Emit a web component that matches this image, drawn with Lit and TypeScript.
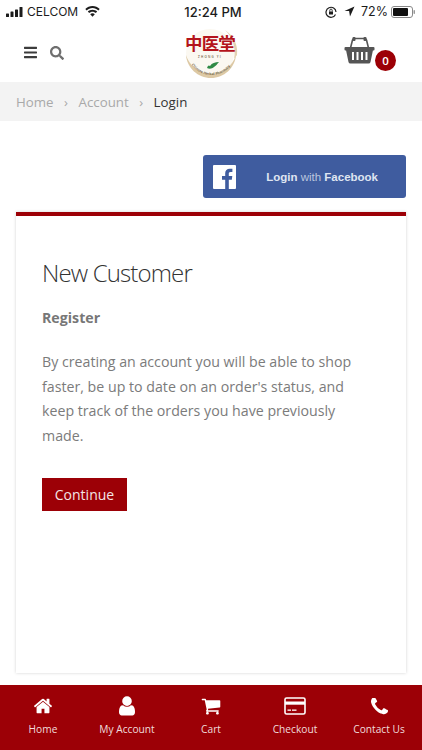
import { LitElement, html, css, svg } from "lit";
import { customElement } from "lit/decorators.js";

const PATHS = {
  home: "M1472 992v480q0 26-19 45t-45 19h-384v-384h-256v384h-384q-26 0-45-19t-19-45v-480q0-1 .5-3t.5-3l575-474 575 474q1 2 1 6zm223-69l-62 74q-8 9-21 11h-3q-13 0-21-7l-692-577-692 577q-12 8-24 7-13-2-21-11l-62-74q-8-10-7-23.500t11-21.500l719-599q32-26 76-26t76 26l244 204v-195q0-14 9-23t23-9h192q14 0 23 9t9 23v408l219 182q10 8 11 21.500t-7 23.500z",
  user: "M1536 1399q0 109-62.500 187t-150.500 78h-854q-88 0-150.500-78t-62.500-187q0-85 8.500-160.500t31.500-152 58.500-131 94-89 134.500-34.500q131 128 313 128t313-128q76 0 134.500 34.500t94 89 58.500 131 31.500 152 8.500 160.500zm-256-887q0 159-112.500 271.500t-271.500 112.500-271.500-112.500-112.500-271.500 112.500-271.500 271.500-112.500 271.500 112.500 112.500 271.500z",
  cart: "M704 1536q0 52-38 90t-90 38-90-38-38-90 38-90 90-38 90 38 38 90zm896 0q0 52-38 90t-90 38-90-38-38-90 38-90 90-38 90 38 38 90zm128-1088v512q0 24-16.500 42.500t-40.500 21.500l-1044 122q13 60 13 70 0 16-24 64h920q26 0 45 19t19 45-19 45-45 19h-1024q-26 0-45-19t-19-45q0-11 8-31.500t16-36 21.500-40 15.500-29.500l-177-823h-204q-26 0-45-19t-19-45 19-45 45-19h256q16 0 28.500 6.500t19.500 15.500 13 24.500 8 26 5.500 29.500 4.500 26h1201q26 0 45 19t19 45z",
  phone: "M1600 1240q0 27-10 70.500t-21 68.500q-21 50-122 106-94 51-186 51-27 0-53-3.500t-57.500-12.500-47-14.500-55.500-20.500-49-18q-98-35-175-83-127-79-264-216t-216-264q-48-77-83-175-3-9-18-49t-20.500-55.500-14.500-47-12.500-57.500-3.500-53q0-92 51-186 56-101 106-122 25-11 68.500-21t70.500-10q14 0 21 3 18 6 53 76 11 19 30 54t35 63.500 31 53.500q3 4 17.500 25t21.500 35.500 7 28.500q0 20-28.500 50t-62 55-62 53-28.500 46q0 9 5 22.500t8.500 20.500 14 24 11.500 19q76 137 174 235t235 174q2 1 19 11.500t24 14 20.500 8.500 22.500 5q18 0 46-28.500t53-62 55-62 50-28.500q14 0 28.500 7t35.500 21.500 25 17.500q25 15 53.500 31t63.500 35 54 30q70 35 76 53 3 7 3 21z",
};

const footerItems = [
  { label: "Home", icon: svg`<svg class="ico i-home" viewBox="0 0 1792 1792" fill="#fff"><path d=${PATHS.home}></path></svg>` },
  { label: "My Account", icon: svg`<svg class="ico i-user" viewBox="200 100 1392 1600" fill="#fff"><path d=${PATHS.user}></path></svg>` },
  { label: "Cart", icon: svg`<svg class="ico i-cart" viewBox="0 0 1792 1792" fill="#fff"><path d=${PATHS.cart}></path></svg>` },
  { label: "Checkout", icon: svg`<svg class="ico i-card" viewBox="0 0 22 18"><rect x="1" y="1" width="20" height="16" rx="1.600" fill="none" stroke="#fff" stroke-width="1.600"></rect><rect x="1" y="4.500" width="20" height="3.200" fill="#fff"></rect><rect x="3.500" y="12.500" width="3.500" height="1.300" fill="#fff"></rect><rect x="8" y="12.500" width="4.500" height="1.300" fill="#fff"></rect></svg>` },
  { label: "Contact Us", icon: svg`<svg class="ico i-phone" viewBox="192 192 1408 1408" fill="#fff"><path d=${PATHS.phone}></path></svg>` },
];

@customElement("app-root")
export class AppRoot extends LitElement {
  static styles = css`
    :host {
      display: flex;
      flex-direction: column;
      width: 422px;
      height: 750px;
      overflow: hidden;
      background: #fff;
      font-family: "Open Sans", "Liberation Sans", sans-serif;
    }
    .status {
      height: 23px;
      flex: none;
      display: grid;
      grid-template-columns: 1fr auto 1fr;
      align-items: center;
      padding: 0 6px 0 6px;
      font-family: Inter, "Liberation Sans", sans-serif;
      font-size: 12.500px;
      color: #1c1c1c;
    }
    .st-left, .st-right { display: flex; align-items: center; }
    .st-left { gap: 3px; }
    .st-left span { font-size: 12px; }
    .st-wifi { margin-left: 4px; }
    .st-right { justify-content: flex-end; }
    .st-time { font-weight: 500; font-size: 13px; margin-left: 4px; }
    .st-arrow { margin-left: 7px; }
    .st-pct { margin-left: 6px; }
    .st-bat { margin-left: 3px; }
    .head {
      height: 59px;
      flex: none;
      display: grid;
      grid-template-columns: 1fr auto 1fr;
      align-items: center;
      padding: 0 26px 0 24px;
    }
    .head-left { display: flex; align-items: center; gap: 13px; }
    .head-right { display: flex; justify-content: flex-end; align-items: center; }
    .logo { display: block; width: 58px; height: 52px; }
    .logo-cn {
      font-family: "Noto Sans CJK SC", sans-serif;
      font-weight: 700;
      font-size: 17.500px;
      letter-spacing: -0.800px;
      fill: #b4141c;
    }
    .logo-small {
      font-family: "Open Sans", sans-serif;
      font-size: 3.600px;
      font-weight: 600;
      fill: #6b5a3c;
    }
    .logo-tiny { font-size: 3px; }
    .basket { position: relative; width: 52px; height: 32px; }
    .badge {
      position: absolute;
      right: 0;
      bottom: -2px;
      width: 21px;
      height: 21px;
      border-radius: 50%;
      background: #9c0006;
      color: #fff;
      font-size: 11.500px;
      font-weight: 600;
      display: flex;
      align-items: center;
      justify-content: center;
    }
    .crumbs {
      height: 39px;
      flex: none;
      background: #f3f3f3;
      display: flex;
      align-items: center;
      padding: 0 16px;
      font-size: 13.300px;
      color: #a9a9a9;
    }
    .crumbs .sep { margin: 0 10.500px; font-size: 13px; }
    .crumbs .cur { color: #333; }
    .main {
      flex: 1;
      min-height: 0;
      display: flex;
      flex-direction: column;
      padding: 34px 16px 12px;
    }
    .fb-row { display: flex; justify-content: flex-end; }
    .fb {
      width: 203px;
      height: 43px;
      box-sizing: border-box;
      border-radius: 3px;
      background: #3f5c9f;
      padding: 0 28px 0 10px;
      display: flex;
      align-items: center;
      justify-content: space-between;
      font-family: "Liberation Sans", Arial, sans-serif;
      font-size: 11.500px;
      color: #dfe5f1;
    }
    .fb b { font-weight: 700; }
    .fb span { color: #b9c5de; }
    .fb-mark { width: 23px; height: 24px; }
    .card {
      flex: 1;
      margin-top: 14px;
      border-top: 4px solid #9c0006;
      background: #fff;
      box-shadow: 0 0 3px rgba(0, 0, 0, 0.18);
      padding: 39px 26px 0;
    }
    h1 {
      margin: 0;
      font-weight: 300;
      font-size: 24px;
      line-height: 36px;
      letter-spacing: -0.850px;
      color: #333;
    }
    h2 {
      margin: 17px 0 0;
      font-size: 14.200px;
      line-height: 20px;
      font-weight: 700;
      color: #777;
    }
    p {
      margin: 22px 0 0;
      max-width: 325px;
      font-size: 14.200px;
      line-height: 24.500px;
      color: #7b7b7b;
    }
    .continue {
      margin-top: 30px;
      display: block;
      width: 85px;
      height: 33px;
      border: 0;
      padding: 0;
      background: #9c0006;
      color: #f3e6e6;
      font-family: inherit;
      font-size: 14px;
    }
    .foot {
      height: 65px;
      flex: none;
      box-sizing: border-box;
      padding: 0 1px;
      background: #9c0006;
      display: grid;
      grid-template-columns: repeat(5, 1fr);
      color: #f0dcdc;
      font-size: 10.200px;
    }
    .foot-item {
      display: flex;
      flex-direction: column;
      align-items: center;
    }
    .foot-icon {
      height: 24px;
      margin-top: 9px;
      display: flex;
      align-items: center;
      justify-content: center;
    }
    .i-home { width: 20px; height: 20px; }
    .i-user { width: 18px; height: 20px; }
    .i-cart { width: 20px; height: 20px; }
    .i-card { width: 22px; height: 18px; }
    .i-phone { width: 17px; height: 17px; }
    .foot-label { margin-top: 1px; line-height: 20px; white-space: nowrap; }
  `;

  render() {
    return html`
      <div class="status">
        <div class="st-left">
          <svg width="18" height="10" viewBox="0 0 18 10" fill="#1c1c1c">
            <rect x="0" y="6.500" width="3" height="3.500" rx=".6"></rect>
            <rect x="4.500" y="4.500" width="3" height="5.500" rx=".6"></rect>
            <rect x="9" y="2.500" width="3" height="7.500" rx=".6"></rect>
            <rect x="13.500" y="0" width="3" height="10" rx=".6"></rect>
          </svg>
          <span>CELCOM</span>
          <svg class="st-wifi" width="15" height="11" viewBox="0 0 15 11" fill="#1c1c1c">
            <path d="M7.500 0C4.700 0 2.200 1.100.3 2.900l1.400 1.500C3.200 2.900 5.300 2 7.500 2s4.300.9 5.800 2.400l1.400-1.500C12.800 1.100 10.300 0 7.500 0z"></path>
            <path d="M7.500 3.700c-1.800 0-3.500.7-4.700 1.900l1.400 1.500c.9-.8 2-1.400 3.300-1.400s2.400.6 3.300 1.400l1.400-1.500C11 4.400 9.300 3.700 7.500 3.700z"></path>
            <path d="M7.500 7.300c-.9 0-1.700.4-2.300 1l2.300 2.500 2.300-2.500c-.6-.6-1.400-1-2.300-1z"></path>
          </svg>
        </div>
        <div class="st-time">12:24 PM</div>
        <div class="st-right">
          <svg width="12" height="12" viewBox="0 0 12 12" fill="none" stroke="#1c1c1c" stroke-width="1.200">
            <path d="M10.500 8.500A5 5 0 1 1 11 6"></path>
            <rect x="4" y="5.500" width="4" height="3" fill="#1c1c1c" stroke="none"></rect>
            <path d="M4.800 5.500V4.300a1.200 1.200 0 0 1 2.400 0v1.200" stroke-width=".9"></path>
          </svg>
          <svg class="st-arrow" width="11" height="11" viewBox="0 0 11 11" fill="#1c1c1c"><path d="M10.500.5L.5 5h4.600l.9 5.500z"></path></svg>
          <span class="st-pct">72%</span>
          <svg class="st-bat" width="25" height="12" viewBox="0 0 25 12">
            <rect x=".5" y=".5" width="21" height="11" rx="2.500" fill="none" stroke="#888"></rect>
            <rect x="2" y="2" width="15" height="8" rx="1" fill="#111"></rect>
            <rect x="22.500" y="4" width="1.500" height="4" rx=".7" fill="#999"></rect>
          </svg>
        </div>
      </div>

      <div class="head">
        <div class="head-left">
          <svg width="13" height="15" viewBox="0 0 448 512" fill="#3c3c3c"><path d="M16 132h416c8.837 0 16-7.163 16-16V76c0-8.837-7.163-16-16-16H16C7.163 60 0 67.163 0 76v40c0 8.837 7.163 16 16 16zm0 160h416c8.837 0 16-7.163 16-16v-40c0-8.837-7.163-16-16-16H16c-8.837 0-16 7.163-16 16v40c0 8.837 7.163 16 16 16zm0 160h416c8.837 0 16-7.163 16-16v-40c0-8.837-7.163-16-16-16H16c-8.837 0-16 7.163-16 16v40c0 8.837 7.163 16 16 16z"></path></svg>
          <svg width="14" height="14" viewBox="0 0 512 512" fill="#6f6f6f"><path d="M505 442.700L405.300 343c-4.500-4.500-10.600-7-17-7H372c27.600-35.300 44-79.700 44-128C416 93.100 322.900 0 208 0S0 93.100 0 208s93.100 208 208 208c48.300 0 92.700-16.400 128-44v16.300c0 6.400 2.500 12.500 7 17l99.700 99.700c9.400 9.400 24.600 9.400 33.900 0l28.300-28.300c9.400-9.400 9.400-24.600.1-34zM208 336c-70.700 0-128-57.200-128-128 0-70.700 57.200-128 128-128 70.700 0 128 57.200 128 128 0 70.700-57.200 128-128 128z"></path></svg>
        </div>
        <svg class="logo" viewBox="0 0 58 52" fill="none">
          <defs><path id="arc" d="M10 37C15 44 22 48 30 48c9 0 17-4 21-12"></path></defs>
          <circle cx="29" cy="26" r="24" fill="#fbf8f1"></circle>
          <path d="M5 28c1 13 12 23 25 23 13 0 24-10 25-23-3 10-13 19-25 19C18 47 8 38 5 28z" fill="#ddc9a5"></path>
          <path d="M44 3c9 6 13 15 12 25l-3 4c2-11-1-21-9-29z" fill="#e3d2b2"></path>
          <path d="M26 41c2 1 5 1 7-1 2-1 3-3 5-5-4 0-7 1-9 4-1-1-2-1-3 2z" fill="#2f8a45"></path>
          <text class="logo-cn" x="29" y="23" text-anchor="middle">中医堂</text>
          <text class="logo-small logo-tiny" x="29" y="31" text-anchor="middle" letter-spacing="1.200">ZHONG YI</text>
          <text class="logo-small"><textPath href="#arc" startOffset="1">Chinese Herbal Pharmacy</textPath></text>
        </svg>
        <div class="head-right">
          <div class="basket">
            <svg width="31" height="27" viewBox="0 0 30 27" fill="#555">
              <path d="M6 11l2-8q.5-1.500 2-1.500h10q1.500 0 2 1.500l2 8" fill="none" stroke="#555" stroke-width="1.600"></path>
              <rect x="8" y="0" width="3" height="4" rx="1"></rect>
              <rect x="19" y="0" width="3" height="4" rx="1"></rect>
              <path fill-rule="evenodd" d="M1 10h28q1 0 1 1v1.500q0 1-1 1h-.6L26 25q-.3 1.500-2 1.500H6Q4.300 26.500 4 25L1.600 13.500H1q-1 0-1-1V11q0-1 1-1zM7.500 15v8h2v-8zM12 15v8h2v-8zM16.500 15v8h2v-8zM21 15v8h2v-8z"></path>
            </svg>
            <div class="badge">0</div>
          </div>
        </div>
      </div>

      <nav class="crumbs">
        <span>Home</span><span class="sep">›</span><span>Account</span><span class="sep">›</span><span class="cur">Login</span>
      </nav>

      <main class="main">
        <div class="fb-row">
          <div class="fb">
            <svg class="fb-mark" viewBox="0 0 23 24"><rect width="23" height="24" rx="1" fill="#fff"></rect><path d="M15.800 24v-9.300h3l.5-3.600h-3.500V8.800c0-1 .3-1.800 1.800-1.800h1.800V3.800c-.3 0-1.400-.1-2.700-.1-2.700 0-4.500 1.600-4.500 4.600v2.800H9v3.600h3.200V24z" fill="#3f5c9f"></path></svg>
            <div><b>Login</b> <span>with</span> <b>Facebook</b></div>
          </div>
        </div>
        <section class="card">
          <h1>New Customer</h1>
          <h2>Register</h2>
          <p>By creating an account you will be able to shop faster, be up to date on an order's status, and keep track of the orders you have previously made.</p>
          <button class="continue">Continue</button>
        </section>
      </main>

      <footer class="foot">
        ${footerItems.map(
          (i) => html`<div class="foot-item"><div class="foot-icon">${i.icon}</div><div class="foot-label">${i.label}</div></div>`
        )}
      </footer>
    `;
  }
}
